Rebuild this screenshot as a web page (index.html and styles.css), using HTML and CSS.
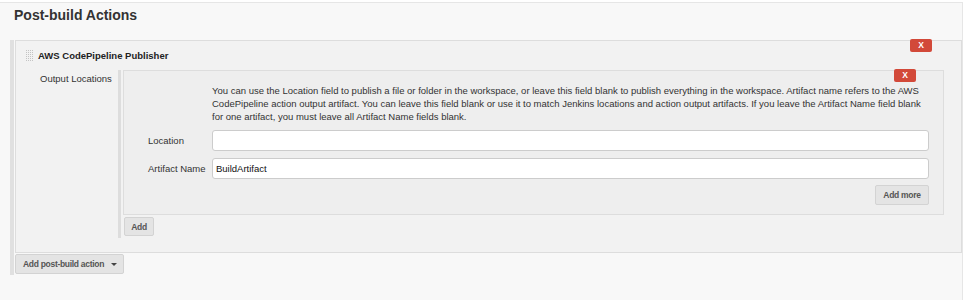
FILE: index.html
```html
<!DOCTYPE html>
<html>
<head>
<meta charset="utf-8">
<link rel="stylesheet" href="styles.css">
</head>
<body>
<div class="page">
  <h1 class="title">Post-build Actions</h1>
  <div class="builder">
    <div class="chunk">
      <button class="del del-outer">X</button>
      <div class="chunk-head">
        <svg class="handle" width="7" height="11" viewBox="0 0 7 11">
          <g fill="#c4c4c4">
            <rect x="0" y="0" width="1" height="1"/><rect x="2" y="0" width="1" height="1"/><rect x="4" y="0" width="1" height="1"/><rect x="6" y="0" width="1" height="1"/>
            <rect x="0" y="2" width="1" height="1"/><rect x="2" y="2" width="1" height="1"/><rect x="4" y="2" width="1" height="1"/><rect x="6" y="2" width="1" height="1"/>
            <rect x="0" y="4" width="1" height="1"/><rect x="2" y="4" width="1" height="1"/><rect x="4" y="4" width="1" height="1"/><rect x="6" y="4" width="1" height="1"/>
            <rect x="0" y="6" width="1" height="1"/><rect x="2" y="6" width="1" height="1"/><rect x="4" y="6" width="1" height="1"/><rect x="6" y="6" width="1" height="1"/>
            <rect x="0" y="8" width="1" height="1"/><rect x="2" y="8" width="1" height="1"/><rect x="4" y="8" width="1" height="1"/><rect x="6" y="8" width="1" height="1"/>
            <rect x="0" y="10" width="1" height="1"/><rect x="2" y="10" width="1" height="1"/><rect x="4" y="10" width="1" height="1"/><rect x="6" y="10" width="1" height="1"/>
          </g>
        </svg>
        <span class="chunk-title">AWS CodePipeline Publisher</span>
      </div>
      <div class="chunk-row">
        <div class="row-label">Output Locations</div>
        <div class="repeat">
          <div class="inner">
            <button class="del del-inner">X</button>
            <div class="desc">You can use the Location field to publish a file or folder in the workspace, or leave this field blank to publish everything in the workspace. Artifact name refers to the AWS CodePipeline action output artifact. You can leave this field blank or use it to match Jenkins locations and action output artifacts. If you leave the Artifact Name field blank for one artifact, you must leave all Artifact Name fields blank.</div>
            <div class="field"><label class="field-label">Location</label><input class="field-input" type="text" value=""></div>
            <div class="field"><label class="field-label">Artifact Name</label><input class="field-input" type="text" value="BuildArtifact"></div>
            <div class="inner-actions"><button class="btn btn-more">Add more</button></div>
          </div>
          <button class="btn btn-add">Add</button>
        </div>
      </div>
    </div>
    <button class="btn btn-action">Add post-build action <span class="caret"></span></button>
  </div>
</div>
</body>
</html>
```

FILE: styles.css
```css
html, body {
  margin: 0;
  padding: 0;
  background: #ffffff;
}
body {
  font-family: "Liberation Sans", Arial, Helvetica, sans-serif;
  color: #333333;
  font-size: 9.5px;
}
.page {
  width: 963px;
  height: 298px;
  margin-top: 2px;
  box-sizing: border-box;
  background: #f8f8f8;
  border-top: 1px solid #e6e6e6;
  border-right: 1px solid #e6e6e6;
}
.title {
  margin: 0;
  padding: 3px 0 0 14px;
  font-size: 14px;
  line-height: 18px;
  font-weight: bold;
  color: #333333;
  height: 37px;
  box-sizing: border-box;
}
.builder {
  margin-left: 10px;
  border-left: 4px solid #e0e0e0;
  padding-left: 1px;
  padding-bottom: 1px;
}
.chunk {
  position: relative;
  background: #f2f2f2;
  border: 1px solid #dddddd;
  padding-bottom: 14px;
}
.del {
  position: absolute;
  width: 22px;
  height: 13px;
  padding: 0;
  border: none;
  border-radius: 2px;
  background: #d24939;
  color: #ffffff;
  font-family: "Liberation Sans", Arial, sans-serif;
  font-weight: bold;
  font-size: 8.5px;
  line-height: 13px;
  text-align: center;
}
.del-outer {
  top: -2px;
  right: 29px;
}
.del-inner {
  top: -2px;
  right: 27px;
}
.chunk-head {
  display: flex;
  align-items: center;
  padding: 5px 0 0 10px;
  height: 18px;
  margin-bottom: 6px;
}
.handle {
  display: block;
  flex: none;
  margin-right: 5px;
}
.chunk-title {
  font-weight: bold;
  font-size: 9.5px;
  color: #222222;
}
.chunk-row {
  display: flex;
  padding-right: 17px;
}
.row-label {
  width: 102px;
  flex: none;
  box-sizing: border-box;
  padding: 2px 0 0 24px;
  line-height: 13px;
}
.repeat {
  flex: 1;
  border-left: 3px solid #dddddd;
  padding-left: 2px;
  padding-bottom: 2px;
}
.inner {
  position: relative;
  background: #eeeeee;
  border: 1px solid #dddddd;
  padding: 13px 14px 9px 24px;
}
.desc {
  margin-left: 64px;
  line-height: 13px;
  color: #333333;
}
.field {
  display: flex;
  align-items: center;
  margin-top: 7px;
}
.field-label {
  width: 64px;
  flex: none;
  line-height: 13px;
}
.field-input {
  flex: 1;
  height: 21px;
  box-sizing: border-box;
  margin: 0;
  border: 1px solid #cccccc;
  border-radius: 3px;
  background: #ffffff;
  padding: 0 3px;
  font-family: "Liberation Sans", Arial, sans-serif;
  font-size: 9.5px;
  color: #111111;
  outline: none;
}
.inner-actions {
  display: flex;
  justify-content: flex-end;
  margin-top: 6px;
}
.btn {
  display: flex;
  align-items: center;
  height: 20px;
  box-sizing: border-box;
  margin: 0;
  padding: 0 7px;
  border: 1px solid #d3d3d3;
  border-radius: 2px;
  background: #e4e4e4;
  color: #555555;
  font-family: "Liberation Sans", Arial, sans-serif;
  font-weight: bold;
  font-size: 8.5px;
  letter-spacing: -0.3px;
  white-space: nowrap;
}
.btn-more {
  width: 54px;
  justify-content: center;
  padding: 0;
}
.btn-add {
  margin-top: 2px;
  margin-left: 1px;
  width: 30px;
  height: 19px;
  justify-content: center;
  padding: 0;
}
.btn-action {
  margin-top: 1px;
  width: 109px;
  padding: 0 0 0 7px;
}
.caret {
  display: block;
  width: 0;
  height: 0;
  margin-left: 7px;
  border-left: 3px solid transparent;
  border-right: 3px solid transparent;
  border-top: 3px solid #444444;
}
```
